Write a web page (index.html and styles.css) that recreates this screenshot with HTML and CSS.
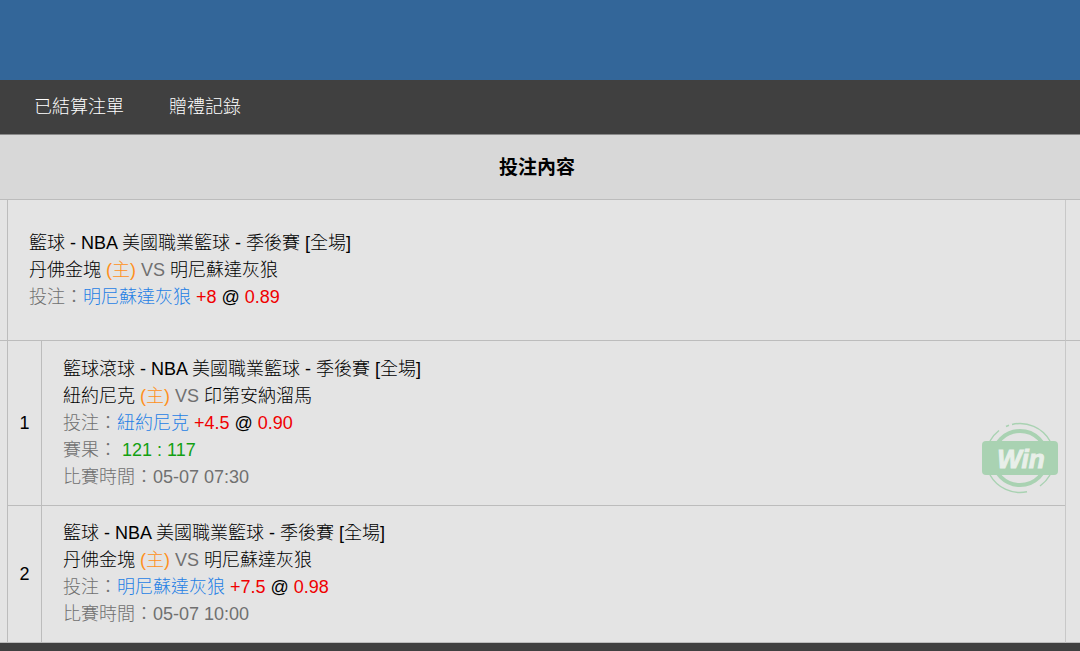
FILE: index.html
```html
<!DOCTYPE html>
<html lang="zh-Hant">
<head>
<meta charset="utf-8">
<meta name="viewport" content="width=device-width, initial-scale=1">
<title>已結算注單</title>
<link rel="stylesheet" href="styles.css">
</head>
<body>
<header class="banner"></header>
<nav class="tabs">
  <a class="tab" href="#settled">已結算注單</a>
  <a class="tab" href="#gifts">贈禮記錄</a>
</nav>
<main>
  <table class="bets">
    <colgroup>
      <col class="col-edge-left">
      <col class="col-index">
      <col>
      <col class="col-edge-right">
    </colgroup>
    <thead>
      <tr><th class="heading" colspan="4" scope="col">投注內容</th></tr>
    </thead>
    <tbody>
      <tr class="single">
        <td class="edge"></td>
        <td class="detail" colspan="2">
          <div class="line">籃球 - NBA 美國職業籃球 - 季後賽 [全場]</div>
          <div class="line">丹佛金塊 <span class="home">(主)</span> <span class="muted">VS</span> 明尼蘇達灰狼</div>
          <div class="line"><span class="muted">投注：</span><span class="pick">明尼蘇達灰狼</span> <span class="odds">+8</span> @ <span class="odds">0.89</span></div>
        </td>
        <td class="edge-right"></td>
      </tr>
      <tr class="leg">
        <td class="edge" rowspan="2"></td>
        <td class="index">1</td>
        <td class="detail">
          <div class="leg-body">
            <div>
              <div class="line">籃球滾球 - NBA 美國職業籃球 - 季後賽 [全場]</div>
              <div class="line">紐約尼克 <span class="home">(主)</span> <span class="muted">VS</span> 印第安納溜馬</div>
              <div class="line"><span class="muted">投注：</span><span class="pick">紐約尼克</span> <span class="odds">+4.5</span> @ <span class="odds">0.90</span></div>
              <div class="line"><span class="muted">賽果：</span> <span class="score">121 : 117</span></div>
              <div class="line muted">比賽時間：05-07 07:30</div>
            </div>
            <svg class="win" viewBox="0 0 78 72" role="img" aria-label="Win">
              <g fill="none" stroke="#a9d2b2">
                <circle cx="39" cy="36" r="27" stroke-width="4"/>
                <path d="M31 2.500A34.500 34.500 0 0 1 69 19M28 3.300L25 4.500M18 8.500A34.500 34.500 0 0 0 9 19M9 53A34.500 34.500 0 0 0 46 69.800M59 64A34.500 34.500 0 0 0 69 53" stroke-width="1.500"/>
              </g>
              <rect x="1" y="19" width="76" height="34" rx="4" fill="#a9d2b2"/>
              <text class="win-text" x="40" y="46" text-anchor="middle">Win</text>
            </svg>
          </div>
        </td>
        <td class="edge-right" rowspan="2"></td>
      </tr>
      <tr class="leg last">
        <td class="index">2</td>
        <td class="detail">
          <div class="line">籃球 - NBA 美國職業籃球 - 季後賽 [全場]</div>
          <div class="line">丹佛金塊 <span class="home">(主)</span> <span class="muted">VS</span> 明尼蘇達灰狼</div>
          <div class="line"><span class="muted">投注：</span><span class="pick">明尼蘇達灰狼</span> <span class="odds">+7.5</span> @ <span class="odds">0.98</span></div>
          <div class="line muted">比賽時間：05-07 10:00</div>
        </td>
      </tr>
    </tbody>
  </table>
</main>
</body>
</html>
```
FILE: styles.css
```css
* { box-sizing: border-box; }

body {
  margin: 0;
  background: #404040;
  color: #000;
  font: 300 18px/27px "Liberation Sans", "Noto Sans CJK TC", sans-serif;
}

.banner {
  height: 80px;
  background: #336699;
}

.tabs {
  display: flex;
  gap: 45px;
  padding: 14px 34px 13px;
  background: #404040;
}

.tab {
  color: #fff;
  text-decoration: none;
}

.bets {
  width: 100%;
  table-layout: fixed;
  border-collapse: separate;
  border-spacing: 0;
  background: #e4e4e4;
}

.col-edge-left { width: 8px; }
.col-index { width: 34px; }
.col-edge-right { width: 15px; }

td {
  padding: 0;
  border: 0 solid #bcbcbc;
  border-bottom-width: 1px;
}

.heading {
  padding: 19px 6px 18px 0;
  border-top: 1px solid #8a8a8a;
  border-bottom: 1px solid #bcbcbc;
  background: #d8d8d8;
  font-size: 19px;
  font-weight: 700;
}

.edge { border-right-width: 1px; }

.edge-right { border-left: 1px solid #c8c8c8; }

.index {
  border-right-width: 1px;
  text-align: center;
}

.single .detail { padding: 30px 21px 29px; }

.leg .detail { padding: 15px 6px 14px 21px; }

.last .detail { padding-top: 14px; }

.leg-body {
  display: flex;
  justify-content: space-between;
  align-items: flex-end;
}

.line { min-height: 27px; }

.home { color: #ff9020; }
.muted { color: #707070; }
.pick { color: #1f7fe5; }
.odds { color: #f00000; }
.score { color: #12a012; }

.win {
  flex: none;
  width: 78px;
  height: 72px;
  margin-bottom: -3px;
}

.win-text {
  fill: #e8efe9;
  stroke: #e8efe9;
  stroke-width: 1px;
  font: italic 700 26px "Liberation Sans", sans-serif;
}
```
